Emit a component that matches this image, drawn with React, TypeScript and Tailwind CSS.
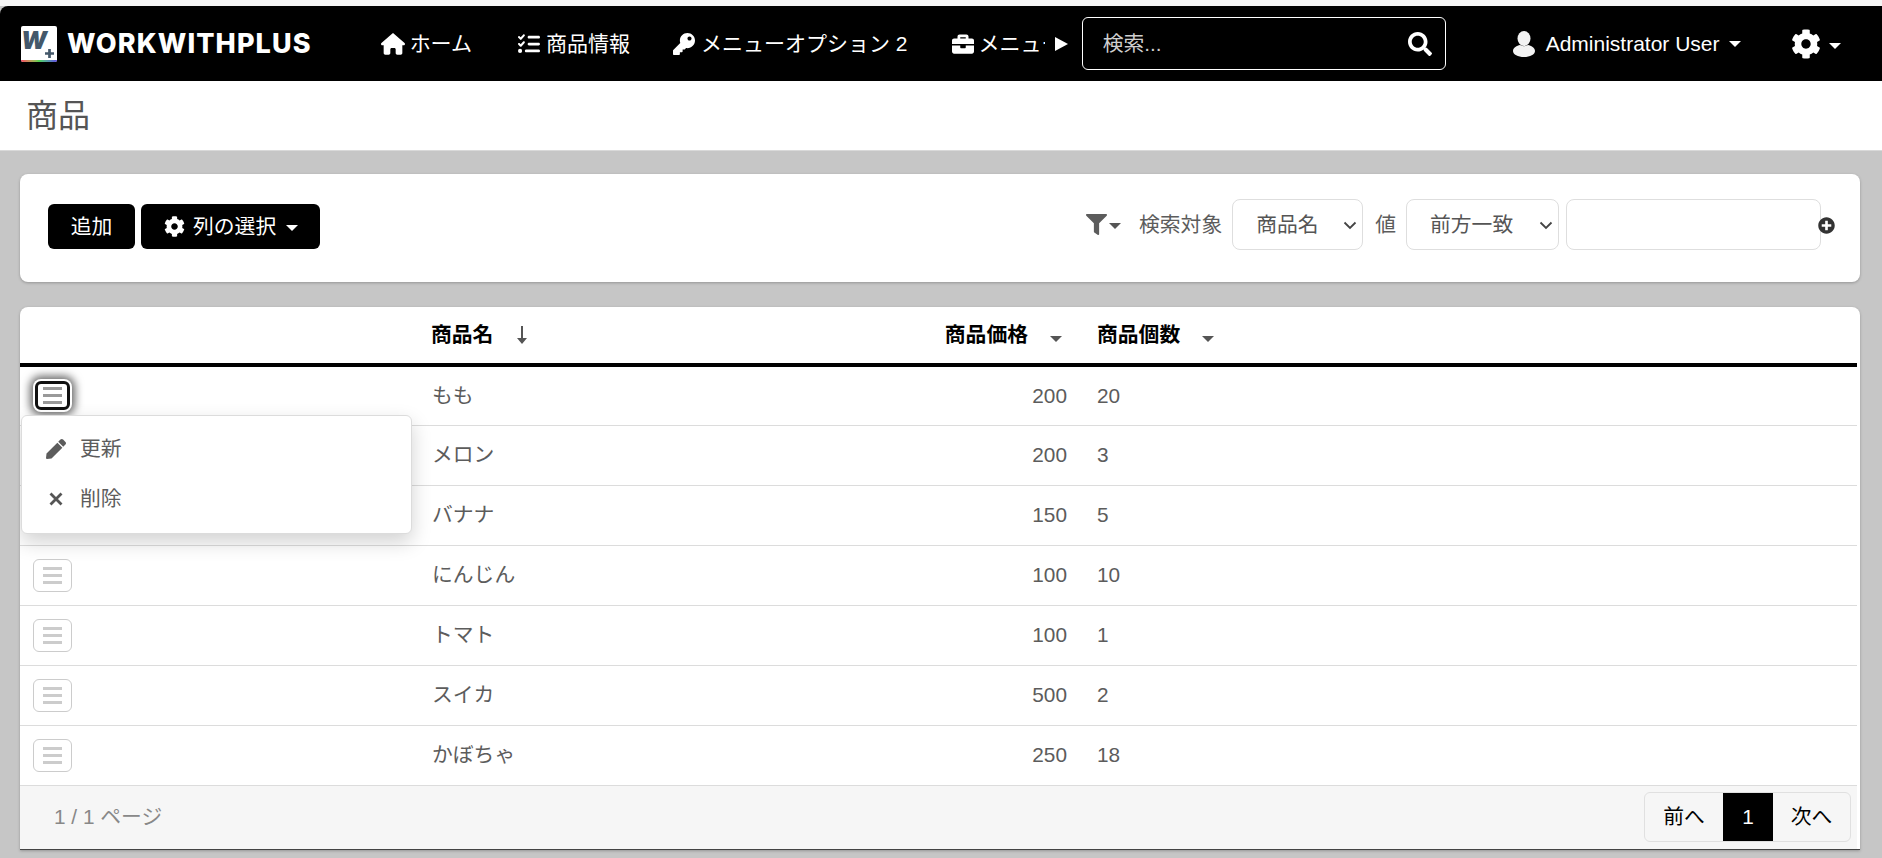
import { FaBriefcase, FaCog, FaFilter, FaKey, FaPen, FaPlusCircle, FaSearch } from 'react-icons/fa';
import { FaHouse, FaListCheck } from 'react-icons/fa6';

const FONT = "font-['Liberation_Sans','Noto_Sans_CJK_JP',sans-serif]";

const rows = [
  { name: 'もも', price: 200, qty: 20 },
  { name: 'メロン', price: 200, qty: 3 },
  { name: 'バナナ', price: 150, qty: 5 },
  { name: 'にんじん', price: 100, qty: 10 },
  { name: 'トマト', price: 100, qty: 1 },
  { name: 'スイカ', price: 500, qty: 2 },
  { name: 'かぼちゃ', price: 250, qty: 18 },
];

function Caret({ className }: { className: string }) {
  return <span className={`inline-block h-0 w-0 border-x-[6px] border-t-[6px] border-x-transparent ${className}`} />;
}

function Logo() {
  return (
    <div className="flex items-center">
      <div className="relative h-[36px] w-[36px] overflow-hidden rounded-[2px] bg-white">
        <span className="absolute left-0 top-[3px] font-['Inter',sans-serif] text-[24px] font-black italic leading-[24px] text-[#44586a]">W</span>
        <svg className="absolute bottom-[4px] right-[3px]" width="9" height="9" viewBox="0 0 10 10" fill="#44586a">
          <path d="M3.500 0h3v3.500H10v3H6.500V10h-3V6.500H0v-3h3.500z" />
        </svg>
        <div className="absolute bottom-0 left-0 h-[2px] w-full bg-gradient-to-r from-[#f04060] via-[#50d050] to-[#6040e0]" />
      </div>
      <span className="ml-[10px] font-['Inter',sans-serif] text-[27px] font-extrabold leading-none tracking-[1.1px] text-white">WORKWITHPLUS</span>
    </div>
  );
}

function UserIcon() {
  return (
    <svg width="22" height="26" viewBox="0 0 22 26" fill="#f2f2f2">
      <ellipse cx="11" cy="7.500" rx="6.500" ry="7.500" />
      <path d="M0 20c0-3.500 4-5.500 7-6 2.500 1.500 5.500 1.500 8 0 3 .5 7 2.500 7 6 0 3.500-5 6-11 6S0 23.500 0 20z" />
    </svg>
  );
}

function NavBar() {
  return (
    <nav className="flex h-[75px] items-center rounded-tl-lg bg-black pl-[21px] text-white">
      <Logo />
      <div className="ml-[69px] flex w-[664px] items-center overflow-hidden whitespace-nowrap text-[21px]">
        <a className="flex shrink-0 items-center gap-[5px]"><FaHouse className="text-[24px]" />ホーム</a>
        <a className="ml-[46px] flex shrink-0 items-center gap-[6px]"><FaListCheck className="text-[22px]" />商品情報</a>
        <a className="ml-[43px] flex shrink-0 items-center gap-[6px]"><FaKey className="text-[22px]" />メニューオプション 2</a>
        <a className="ml-[44px] flex shrink-0 items-center gap-[5px]"><FaBriefcase className="text-[22px]" />メニューオプション 3</a>
      </div>
      <span className="ml-[10px] h-0 w-0 border-y-[7px] border-l-[13px] border-y-transparent border-l-white" />
      <div className="ml-[14px] flex h-[53px] w-[364px] items-center justify-between rounded-[6px] border border-white pl-[20px] pr-[13px]">
        <span className="text-[20.800px] text-[#cfcfcf]">検索...</span>
        <FaSearch className="text-[24px]" />
      </div>
      <div className="ml-[67px] flex items-center">
        <UserIcon />
        <span className="ml-[11px] text-[21px]">Administrator User</span>
        <Caret className="ml-[9px] border-t-white" />
      </div>
      <div className="ml-[50px] flex items-center">
        <FaCog className="text-[30px]" />
        <Caret className="ml-[8px] mt-[5px] border-t-white" />
      </div>
    </nav>
  );
}

function Select({ value, className }: { value: string; className: string }) {
  return (
    <div className={`relative ${className}`}>
      <select className="h-[51px] w-full appearance-none rounded-[8px] border border-[#dedede] bg-white pl-[23px] text-[20.800px] text-[#555]" defaultValue={value}>
        <option>{value}</option>
      </select>
      <svg className="pointer-events-none absolute right-[6px] top-[22px]" width="14" height="9" viewBox="0 0 14 9" fill="none" stroke="#444" strokeWidth="1.800">
        <path d="M1.500 1.500 7 7l5.500-5.500" />
      </svg>
    </div>
  );
}

function FilterCard() {
  return (
    <section className="flex h-[108px] items-center justify-between rounded-[8px] bg-white pl-[28px] pr-[39px] shadow-[0_1px_3px_rgba(0,0,0,0.25)]">
      <div className="mb-[3px] flex gap-[6px] text-[20.800px] text-white">
        <button className="h-[45px] w-[87px] rounded-[6px] bg-black">追加</button>
        <button className="flex h-[45px] w-[179px] items-center rounded-[6px] bg-black pl-[23px]">
          <FaCog className="text-[21px]" />
          <span className="ml-[8px]">列の選択</span>
          <Caret className="ml-[10px] mt-[3px] border-t-white" />
        </button>
      </div>
      <div className="mb-[7px] flex items-center text-[20.800px] text-[#5c5c5c]">
        <FaFilter className="text-[21px]" />
        <Caret className="ml-[2px] mt-[3px] border-t-[#555]" />
        <span className="ml-[18px]">検索対象</span>
        <Select value="商品名" className="ml-[10px] w-[131px]" />
        <span className="ml-[12px]">値</span>
        <Select value="前方一致" className="ml-[10px] w-[153px]" />
        <div className="relative ml-[7px]">
          <input className="block h-[51px] w-[255px] rounded-[8px] border border-[#dedede] bg-white" />
          <FaPlusCircle className="absolute right-[-14px] top-[18px] text-[17px] text-[#333]" />
        </div>
      </div>
    </section>
  );
}

function RowButton({ active }: { active?: boolean }) {
  if (active) {
    return (
      <button className="ml-[15px] flex h-[29px] w-[35px] flex-col items-center justify-center gap-[4px] rounded-[6px] border-[3px] border-[#111] bg-white shadow-[0_0_0_2px_#fff,0_0_8px_5px_rgba(0,0,0,0.6)]">
        <span className="h-[3px] w-[19px] bg-[#999]" />
        <span className="h-[3px] w-[19px] bg-[#999]" />
        <span className="h-[3px] w-[19px] bg-[#999]" />
      </button>
    );
  }
  return (
    <button className="ml-[13px] flex h-[33px] w-[39px] flex-col items-center justify-center gap-[4px] rounded-[6px] border border-[#ccc] bg-white">
      <span className="h-[3px] w-[19px] bg-[#ccc]" />
      <span className="h-[3px] w-[19px] bg-[#ccc]" />
      <span className="h-[3px] w-[19px] bg-[#ccc]" />
    </button>
  );
}

function ProductTable() {
  return (
    <section className="relative mt-[25px] overflow-hidden rounded-t-[8px] border-b border-[#444] bg-white pr-[3px] shadow-[0_1px_3px_rgba(0,0,0,0.25)]">
      <table className="w-full table-fixed border-collapse text-[20.800px] text-[#5c5c5c]">
        <colgroup>
          <col className="w-[396px]" />
          <col className="w-[350px]" />
          <col className="w-[316px]" />
          <col />
        </colgroup>
        <thead>
          <tr className="h-[58px] border-b-[4px] border-black text-black">
            <th />
            <th className="pl-[15px] text-left font-bold">
              <span className="inline-flex items-center">
                商品名
                <svg className="ml-[24px]" width="10" height="18" viewBox="0 0 10 18" fill="#555">
                  <path d="M4 0h2v12h4l-5 6-5-6h4z" />
                </svg>
              </span>
            </th>
            <th className="pr-[20px] text-right font-bold">
              商品価格<Caret className="ml-[22px] border-t-[#555]" />
            </th>
            <th className="pl-[15px] text-left font-bold">
              商品個数<Caret className="ml-[22px] border-t-[#555]" />
            </th>
          </tr>
        </thead>
        <tbody>
          {rows.map((row, i) => (
            <tr key={row.name} className="h-[60px] border-b border-[#dcdcdc]">
              <td><RowButton active={i === 0} /></td>
              <td className="pl-[16px]">{row.name}</td>
              <td className="pr-[15px] text-right">{row.price}</td>
              <td className="pl-[15px]">{row.qty}</td>
            </tr>
          ))}
        </tbody>
      </table>

      <div className="flex h-[63px] items-center justify-between bg-[#f6f6f6] pl-[34px] pr-[6px] text-[20.800px]">
        <span className="text-[#888]">1 / 1 ページ</span>
        <div className="flex h-[50px] overflow-hidden rounded-[6px] border border-[#e0e0e0] text-black">
          <a className="flex w-[78px] items-center justify-center">前へ</a>
          <a className="flex w-[50px] items-center justify-center bg-black text-white">1</a>
          <a className="flex w-[77px] items-center justify-center">次へ</a>
        </div>
      </div>

      <div className="absolute left-[1px] top-[108px] h-[119px] w-[391px] rounded-[6px] border border-[#dcdcdc] bg-white text-[20.800px] text-[#5c5c5c] shadow-[0_8px_20px_rgba(0,0,0,0.18)]">
        <div className="flex h-[65px] items-center pl-[24px]">
          <FaPen className="text-[20px]" />
          <span className="ml-[14px]">更新</span>
        </div>
        <div className="flex h-[36px] items-center pl-[26px]">
          <svg width="16" height="16" viewBox="0 0 16 16" fill="none" stroke="#555" strokeWidth="2.800">
            <path d="M2.500 2.500l11 11M13.500 2.500l-11 11" />
          </svg>
          <span className="ml-[16px]">削除</span>
        </div>
      </div>
    </section>
  );
}

export default function App() {
  return (
    <div className={`min-h-[858px] bg-[#c6c6c6] pt-[6px] ${FONT}`}>
      <div className="absolute left-0 top-0 h-[6px] w-full bg-[#f5f5f5]" />
      <NavBar />
      <header className="flex h-[70px] items-center border-b border-[#d9d9d9] bg-white pl-[26px] text-[32px] text-[#555]">
        商品
      </header>
      <main className="pb-[10px] pl-[20px] pr-[22px] pt-[23px]">
        <FilterCard />
        <ProductTable />
      </main>
    </div>
  );
}
